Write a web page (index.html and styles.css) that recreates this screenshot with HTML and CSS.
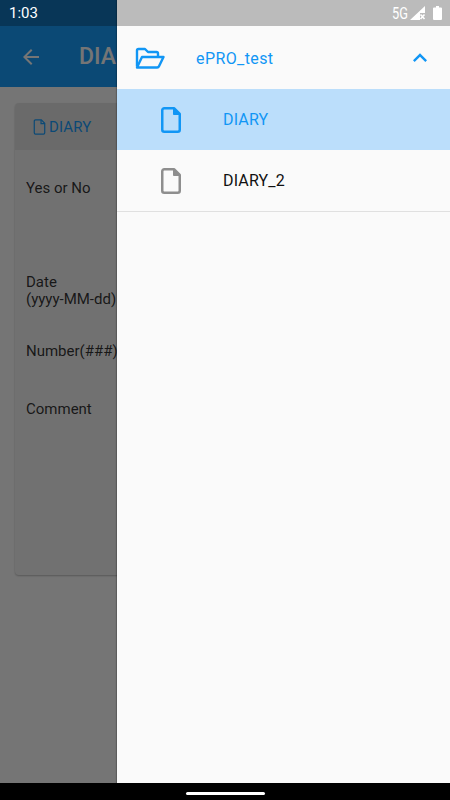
FILE: index.html
```html
<!DOCTYPE html>
<html lang="en">

<head>
    <meta charset="UTF-8" />
    <meta name="viewport" content="width=device-width, initial-scale=1.0" />
    <title>ePRO test</title>
    <link rel="stylesheet" href="styles.css">
</head>

<body>
    <div class="screen">
        <header class="app-bar">
            <svg class="back-icon" width="24" height="24" viewBox="0 0 24 24">
                <path d="M20 11H7.83l5.59-5.59L12 4l-8 8 8 8 1.41-1.41L7.83 13H20v-2z" />
            </svg>
            <h1 class="app-title">DIARY</h1>
        </header>

        <main class="content">
            <section class="card">
                <div class="tabs">
                    <div class="tab">
                        <svg class="tab-icon" width="13" height="16" viewBox="0 0 20 26">
                            <path d="M3.5 1.5H13L18.5 7V22.5a2 2 0 0 1-2 2h-13a2 2 0 0 1-2-2v-19a2 2 0 0 1 2-2z" />
                            <path d="M12.5 1.5V7.5H18.5" />
                        </svg>
                        <span>DIARY</span>
                    </div>
                </div>
                <div class="form">
                    <div class="field-label field-yes">Yes or No</div>
                    <div class="field-label field-date">Date<br>(yyyy-MM-dd)</div>
                    <div class="field-label field-number">Number(###)</div>
                    <div class="field-label field-comment">Comment</div>
                </div>
            </section>
        </main>

        <div class="nav-bar">
            <div class="nav-handle"></div>
        </div>

        <div class="scrim"></div>

        <aside class="drawer">
            <div class="drawer-header">
                <svg class="folder-icon" width="30" height="22" viewBox="0 0 30 22">
                    <path d="M2 19.5V3.500A1.500 1.500 0 0 1 3.500 2H10l3 3h8.500A1.500 1.500 0 0 1 23 6.500V10" />
                    <path d="M2 20.500L7 10H28.500L24 19.300a2 2 0 0 1-1.800 1.200H2z" />
                </svg>
                <span class="folder-name">ePRO_test</span>
                <svg class="chevron" width="28" height="28" viewBox="0 0 24 24">
                    <path d="M7.410 15.410L12 10.830l4.590 4.580L18 14l-6-6-6 6z" />
                </svg>
            </div>
            <div class="drawer-item active">
                <svg class="file-icon" width="20" height="26" viewBox="0 0 20 26">
                    <path d="M3.500 1.250H13L18.750 7V22.750a2 2 0 0 1-2 2h-13.500a2 2 0 0 1-2-2v-19.500a2 2 0 0 1 2-2z" />
                    <path class="fold" d="M12.500 1.250V7.500H18.750z" />
                </svg>
                <span>DIARY</span>
            </div>
            <div class="drawer-item last">
                <svg class="file-icon" width="20" height="26" viewBox="0 0 20 26">
                    <path d="M3.500 1.250H13L18.750 7V22.750a2 2 0 0 1-2 2h-13.500a2 2 0 0 1-2-2v-19.500a2 2 0 0 1 2-2z" />
                    <path class="fold" d="M12.500 1.250V7.500H18.750z" />
                </svg>
                <span>DIARY_2</span>
            </div>
        </aside>

        <div class="status-bar">
            <span class="status-time">1:03</span>
            <div class="status-icons">
                <span class="status-net">5G</span>
                <svg width="16" height="14" viewBox="0 0 16 14">
                    <path d="M15 0V7H10V14H0z" fill="#fff" />
                    <path d="M10.500 8.500l4 4.500M14.500 8.500l-4 4.500" stroke="#fff" stroke-width="1.600" fill="none" />
                </svg>
                <svg class="battery" width="9" height="14" viewBox="0 0 9 14">
                    <path d="M3 0h3v1.500h2a1 1 0 0 1 1 1V13a1 1 0 0 1-1 1H1a1 1 0 0 1-1-1V2.500a1 1 0 0 1 1-1h2z" fill="#fff" />
                </svg>
            </div>
        </div>
    </div>
</body>

</html>
```

FILE: styles.css
```css
* {
    box-sizing: border-box;
}

html,
body {
    margin: 0;
    padding: 0;
}

body {
    font-family: Roboto, "Liberation Sans", sans-serif;
}

.screen {
    position: relative;
    display: flex;
    flex-direction: column;
    width: 450px;
    height: 800px;
    overflow: hidden;
    background: white;
}

.app-bar {
    display: flex;
    align-items: center;
    flex-shrink: 0;
    height: 87px;
    padding: 26px 0 0 19px;
    background: #1a9fff;
    color: white;
}

.back-icon {
    fill: white;
}

.app-title {
    margin: 0 0 0 36px;
    font-size: 23px;
    font-weight: 500;
}

.content {
    flex: 1;
    padding: 16px 15px 0;
}

.card {
    height: 472px;
    background: #f7f7f7;
    border-radius: 4px;
    overflow: hidden;
    box-shadow: 0 1px 2px rgba(0, 0, 0, 0.25);
}

.tabs {
    height: 47px;
    background: #e8e8e8;
}

.tab {
    display: flex;
    align-items: center;
    gap: 3px;
    height: 100%;
    padding-left: 18px;
    color: #1a9fff;
    font-size: 15px;
    letter-spacing: 0.1px;
}

.tab-icon {
    fill: none;
    stroke: #1a9fff;
    stroke-width: 2;
}

.form {
    padding: 30px 0 0 11px;
}

.field-label {
    width: 92px;
    color: rgba(0, 0, 0, 0.8);
    font-size: 15px;
    line-height: 17px;
    white-space: nowrap;
}

.field-date {
    margin-top: 77px;
}

.field-number {
    margin-top: 35px;
}

.field-comment {
    margin-top: 41px;
}

.nav-bar {
    position: relative;
    z-index: 3;
    display: flex;
    justify-content: center;
    align-items: center;
    flex-shrink: 0;
    height: 17px;
    background: black;
}

.nav-handle {
    width: 79px;
    height: 3px;
    margin-top: 3px;
    background: white;
    border-radius: 2px;
}

.scrim {
    position: absolute;
    top: 0;
    left: 0;
    right: 0;
    bottom: 17px;
    background: rgba(0, 0, 0, 0.54);
}

.drawer {
    position: absolute;
    top: 0;
    left: 117px;
    right: 0;
    bottom: 17px;
    padding-top: 27px;
    background: #fafafa;
    box-shadow: -1px 0 1px rgba(0, 0, 0, 0.2);
}

.drawer-header {
    display: flex;
    align-items: center;
    height: 62px;
    padding: 0 16px 0 18px;
    color: #1196f5;
    font-size: 16px;
}

.folder-icon {
    flex-shrink: 0;
    fill: none;
    stroke: #1196f5;
    stroke-width: 2.4;
    stroke-linejoin: round;
}

.folder-name {
    flex: 1;
    margin-left: 31px;
    letter-spacing: 0.4px;
}

.chevron {
    fill: #1196f5;
}

.drawer-item {
    display: flex;
    align-items: center;
    height: 61px;
    padding-left: 44px;
    color: #111;
    font-size: 16px;
}

.drawer-item span {
    margin-left: 42px;
    letter-spacing: 0.15px;
}

.file-icon {
    fill: none;
    stroke: #8e8e8e;
    stroke-width: 2.5;
    stroke-linejoin: round;
}

.file-icon .fold {
    fill: #8e8e8e;
    stroke-width: 1;
}

.drawer-item.active {
    background: #bbdefb;
    color: #1196f5;
}

.drawer-item.active .file-icon {
    stroke: #1196f5;
}

.drawer-item.active .fold {
    fill: #1196f5;
}

.drawer-item.last {
    height: 62px;
    border-bottom: 1px solid #e0e0e0;
}

.status-bar {
    position: absolute;
    top: 0;
    left: 0;
    right: 0;
    z-index: 2;
    display: flex;
    justify-content: space-between;
    align-items: center;
    height: 26px;
    padding: 0 8px 0 9px;
    background: rgba(0, 0, 0, 0.25);
    color: white;
}

.status-time {
    font-size: 15px;
}

.status-icons {
    display: flex;
    align-items: center;
    gap: 1px;
}

.status-net {
    margin-right: -1px;
    font-size: 16px;
    transform: scaleX(0.8);
}

.battery {
    margin-left: 6px;
}
```
